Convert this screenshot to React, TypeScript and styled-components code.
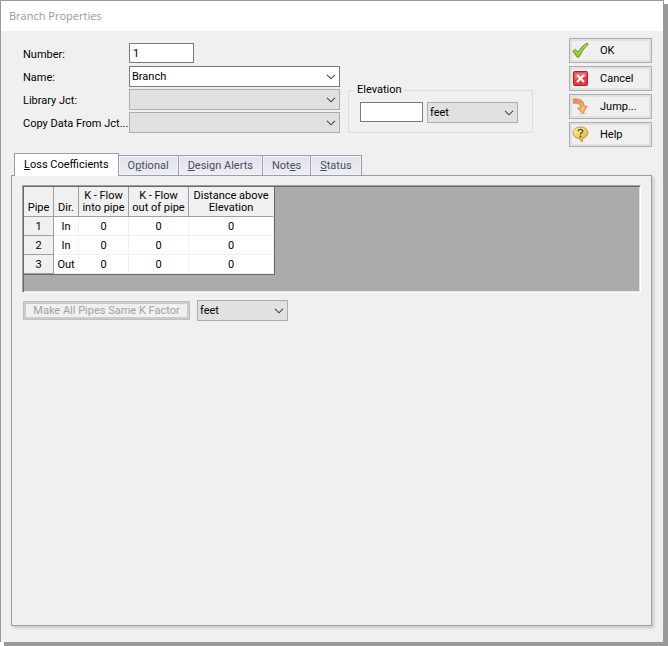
import React from "react";
import styled, { createGlobalStyle } from "styled-components";

const GlobalStyle = createGlobalStyle`
  * { box-sizing: border-box; }
  body {
    margin: 0;
    background: #fff;
    color: #000;
    font: 11px/14px Roboto, "Liberation Sans", sans-serif;
  }
  button, input, select { font: inherit; color: inherit; margin: 0; border-radius: 0; }
`;

const Screen = styled.div`
  min-height: 100vh;
  padding: 0 4px 4px 0;
  display: flex;
`;

const Dialog = styled.main`
  flex: 1;
  min-width: 0;
  display: flex;
  flex-direction: column;
  background: #f0f0f0;
  border: 1px solid #9b9b9b;
  border-bottom: 0;
  box-shadow: 4px 4px 0 #999;
`;

const TitleBar = styled.h1`
  margin: 0;
  padding: 0 8px;
  height: 30px;
  background: #fff;
  color: #999;
  font: 11px/30px "Open Sans", sans-serif;
`;

const Content = styled.div`
  flex: 1;
  display: flex;
  flex-direction: column;
  gap: 6px;
  padding: 7px 11px 16px 10px;
`;

const TopArea = styled.div`
  display: flex;
  align-items: flex-start;
  min-height: 109px;
`;

const Form = styled.div`
  display: flex;
  flex-direction: column;
  gap: 2px;
  padding: 5px 0 0 12px;
`;

const FormRow = styled.div`
  display: flex;
  align-items: flex-start;
  height: 21px;
`;

const Label = styled.label`
  width: 106px;
  padding-top: 5px;
  white-space: nowrap;
`;

const TextInput = styled.input<{ $width: number }>`
  width: ${(p) => p.$width}px;
  height: 20px;
  padding: 0 3px;
  border: 1px solid #7a7a7a;
  background: #fff;
`;

const SelectBox = styled.span<{ $width: number }>`
  display: grid;
  width: ${(p) => p.$width}px;
  height: 21px;
  & > * { grid-area: 1 / 1; }
  & > svg { justify-self: end; align-self: center; margin-right: 4px; pointer-events: none; }
`;

const NativeSelect = styled.select<{ $white?: boolean }>`
  appearance: none;
  width: 100%;
  height: 100%;
  padding: 0 18px 0 2px;
  border: 1px solid ${(p) => (p.$white ? "#7a7a7a" : "#adadad")};
  background: ${(p) => (p.$white ? "#fff" : "#e1e1e1")};
`;

const Group = styled.fieldset`
  display: flex;
  gap: 4px;
  margin: 44px 0 0 8px;
  padding: 4px 14px 9px 11px;
  border: 1px solid #dcdcdc;
`;

const Legend = styled.legend`
  margin-left: -5px;
  padding: 0 2px;
  height: 16px;
  line-height: 16px;
`;

const Actions = styled.div`
  display: flex;
  flex-direction: column;
  gap: 3px;
  margin-left: auto;
`;

const ActionButton = styled.button`
  display: flex;
  align-items: center;
  gap: 11px;
  width: 83px;
  height: 25px;
  padding: 0 2px;
  border: 1px solid #adadad;
  background: #f0f0f0;
  box-shadow: inset 0 0 0 2px #e1e1e1;
  & > svg { flex: none; }
`;

const ActionText = styled.span`
  padding-top: 1px;
`;

const Tabs = styled.section`
  flex: 1;
  display: flex;
  flex-direction: column;
`;

const TabList = styled.div`
  display: flex;
  align-items: flex-end;
  height: 22px;
  padding-left: 3px;
`;

const Tab = styled.button<{ $active?: boolean }>`
  position: relative;
  height: ${(p) => (p.$active ? 23 : 20)}px;
  margin-bottom: ${(p) => (p.$active ? -1 : 0)}px;
  padding: 0 9px;
  border: 1px solid #9c9cb0;
  border-left-width: ${(p) => (p.$active ? 1 : 0)}px;
  border-bottom: 0;
  background: ${(p) => (p.$active ? "#fff" : "linear-gradient(#e0e2e9, #eceef2)")};
  box-shadow: ${(p) => (p.$active ? "none" : "inset 0 0 0 1px #f3f3f8")};
  color: ${(p) => (p.$active ? "#000" : "#4c4c66")};
  white-space: nowrap;
`;

const TabPanel = styled.div`
  flex: 1;
  padding: 9px 10px;
  border: 1px solid #9c9cb0;
  box-shadow: 2px 2px 3px #c8c8cc;
`;

const GridFrame = styled.div`
  min-height: 108px;
  border: 1px solid;
  border-color: #a0a0a0 #fff #fff #a0a0a0;
  background: #ababab;
  box-shadow: inset 1px 1px 0 #696969, inset -1px -1px 0 #e3e3e3;
  padding: 1px;
`;

const Table = styled.table`
  border-collapse: separate;
  border-spacing: 0;
  table-layout: fixed;
  width: 251px;
  border-right: 1px solid #696969;
  border-bottom: 1px solid #696969;
  line-height: 12px;
  text-align: center;
`;

const HeadCell = styled.th`
  height: 30px;
  padding: 0 0 2px;
  border-right: 1px solid #a0a0a0;
  border-bottom: 1px solid #a0a0a0;
  background: #f0f0f0;
  font-weight: normal;
  vertical-align: bottom;
  white-space: nowrap;
  &:last-child { border-right-color: #f0f0f0; }
`;

const RowHead = styled.th`
  height: 19px;
  padding: 2px 0 0;
  border-right: 1px solid #a0a0a0;
  border-bottom: 1px solid #a0a0a0;
  background: #f0f0f0;
  font-weight: normal;
`;

const Cell = styled.td`
  padding: 2px 0 0;
  border-right: 1px solid #f0f0f0;
  border-bottom: 1px solid #f0f0f0;
  background: #fff;
`;

const PanelTools = styled.div`
  display: flex;
  align-items: center;
  gap: 7px;
  padding: 7px 1px;
`;

const WideButton = styled.button`
  width: 167px;
  height: 19px;
  padding: 0;
  border: 1px solid #bfbfbf;
  background: #f0f0f0;
  box-shadow: inset 0 0 0 2px #ccc;
  line-height: 17px;
  white-space: nowrap;
  &:disabled { color: #a3a3a3; }
`;

const Chevron = () => (
  <svg width="10" height="6" viewBox="0 0 10 6" aria-hidden="true">
    <path d="M1 .8 5 4.8 9 .8" fill="none" stroke="#444" strokeWidth="1.1" />
  </svg>
);

function Select({ id, label, options, width, white }: {
  id?: string; label?: string; options: string[]; width: number; white?: boolean;
}) {
  return (
    <SelectBox $width={width}>
      <NativeSelect id={id} aria-label={label} $white={white}>
        {options.map((o) => <option key={o}>{o}</option>)}
      </NativeSelect>
      <Chevron />
    </SelectBox>
  );
}

const CheckIcon = () => (
  <svg width="17" height="17" viewBox="0 0 17 17" aria-hidden="true">
    <path d="M.8 9.2 3.4 7.2 6 10.200C8.200 6.400 11.200 3 15.200 1L16.200 2.500C12.200 6 9.300 10 7.300 15L5.200 15.200Z" fill="#8fc832" stroke="#5f9a25" strokeWidth=".9" strokeLinejoin="round" />
    <path d="M2.300 9.100 3.300 8.500 6.200 12C8.400 7.800 10.800 5.200 14 3" fill="none" stroke="#b4de62" strokeWidth=".9" />
  </svg>
);

const CancelIcon = () => (
  <svg width="17" height="17" viewBox="0 0 17 17" aria-hidden="true">
    <rect x="1.5" y="1.5" width="14" height="14" rx="1" fill="#e5383b" stroke="#b32025" />
    <path d="M2.5 8V2.5h12V7C10 7 7 8 2.5 10Z" fill="#ef6a68" />
    <path d="m5 5 7 7m0-7-7 7" stroke="#fff" strokeWidth="2.4" />
  </svg>
);

const JumpIcon = () => (
  <svg width="17" height="17" viewBox="0 0 17 17" aria-hidden="true">
    <ellipse cx="10.5" cy="15.6" rx="4.5" ry="1" fill="#d5d5d5" />
    <path d="M1.2 .8C7 .2 11.8 2 12.3 8.5L15.2 8 11 15.2 5.5 10.3 8.5 9.5C8.7 6 6 4.8 1.5 5.5Z" fill="#f7a457" stroke="#d77a38" strokeWidth=".8" strokeLinejoin="round" />
    <path d="M2 1.6C5.5 1.5 8.8 2.7 9.8 6.2 8 4.4 5 4.2 2 4.7Z" fill="#e98a68" />
    <path d="M10.3 8v2.4l-2.7.5 3.2 2.9 2.4-4.6" fill="#ffc478" />
  </svg>
);

const HelpIcon = () => (
  <svg width="17" height="17" viewBox="0 0 17 17" aria-hidden="true">
    <defs>
      <linearGradient id="help-fill" x1="0" y1="0" x2="1" y2="1">
        <stop offset="0" stopColor="#fff6b0" />
        <stop offset="1" stopColor="#d9ab20" />
      </linearGradient>
    </defs>
    <path d="M8.5 1C12.7 1 15.8 3.3 15.8 6.7 15.8 9.6 13.6 11.5 10.8 12.2L10 16 7 12.6C3.6 12.2 1.2 9.9 1.2 6.7 1.2 3.3 4.4 1 8.5 1Z" fill="url(#help-fill)" stroke="#b18b22" strokeWidth=".9" />
    <path d="M6 5.2C6 2.7 10.7 2.6 10.7 5.2 10.7 6.8 8.4 6.8 8.4 8.6" fill="none" stroke="#575031" strokeWidth="1.3" />
    <circle cx="8.4" cy="10.5" r=".9" fill="#575031" />
  </svg>
);

const actions = [
  { text: "OK", Icon: CheckIcon },
  { text: "Cancel", Icon: CancelIcon },
  { text: "Jump...", Icon: JumpIcon },
  { text: "Help", Icon: HelpIcon },
];

const tabs = [
  ["", "L", "oss Coefficients"],
  ["O", "p", "tional"],
  ["", "D", "esign Alerts"],
  ["Not", "e", "s"],
  ["", "S", "tatus"],
];

const pipes = [
  { pipe: 1, dir: "In" },
  { pipe: 2, dir: "In" },
  { pipe: 3, dir: "Out" },
];

export default function App() {
  return (
    <Screen>
      <GlobalStyle />
      <Dialog>
        <TitleBar>Branch Properties</TitleBar>
        <Content>
          <TopArea>
            <Form>
              <FormRow>
                <Label htmlFor="number">Number:</Label>
                <TextInput id="number" $width={65} defaultValue="1" />
              </FormRow>
              <FormRow>
                <Label htmlFor="name">Name:</Label>
                <Select id="name" options={["Branch"]} width={211} white />
              </FormRow>
              <FormRow>
                <Label htmlFor="library">Library Jct:</Label>
                <Select id="library" options={[""]} width={211} />
              </FormRow>
              <FormRow>
                <Label htmlFor="copy">Copy Data From Jct...</Label>
                <Select id="copy" options={[""]} width={211} />
              </FormRow>
            </Form>
            <Group>
              <Legend>Elevation</Legend>
              <TextInput $width={63} aria-label="Elevation" />
              <Select label="Elevation units" options={["feet"]} width={91} />
            </Group>
            <Actions>
              {actions.map(({ text, Icon }) => (
                <ActionButton key={text} type="button">
                  <Icon />
                  <ActionText>{text}</ActionText>
                </ActionButton>
              ))}
            </Actions>
          </TopArea>
          <Tabs>
            <TabList role="tablist">
              {tabs.map(([before, key, after], i) => (
                <Tab key={after} type="button" role="tab" aria-selected={i === 0} $active={i === 0}>
                  {before}<u>{key}</u>{after}
                </Tab>
              ))}
            </TabList>
            <TabPanel role="tabpanel">
              <GridFrame>
                <Table>
                  <colgroup>
                    <col width="30" /><col width="25" /><col width="50" /><col width="60" /><col width="85" />
                  </colgroup>
                  <thead>
                    <tr>
                      <HeadCell>Pipe</HeadCell>
                      <HeadCell>Dir.</HeadCell>
                      <HeadCell>K - Flow<br />into pipe</HeadCell>
                      <HeadCell>K - Flow<br />out of pipe</HeadCell>
                      <HeadCell>Distance above<br />Elevation</HeadCell>
                    </tr>
                  </thead>
                  <tbody>
                    {pipes.map(({ pipe, dir }) => (
                      <tr key={pipe}>
                        <RowHead scope="row">{pipe}</RowHead>
                        <Cell>{dir}</Cell>
                        <Cell>0</Cell>
                        <Cell>0</Cell>
                        <Cell>0</Cell>
                      </tr>
                    ))}
                  </tbody>
                </Table>
              </GridFrame>
              <PanelTools>
                <WideButton type="button" disabled>Make All Pipes Same K Factor</WideButton>
                <Select label="Distance units" options={["feet"]} width={91} />
              </PanelTools>
            </TabPanel>
          </Tabs>
        </Content>
      </Dialog>
    </Screen>
  );
}
